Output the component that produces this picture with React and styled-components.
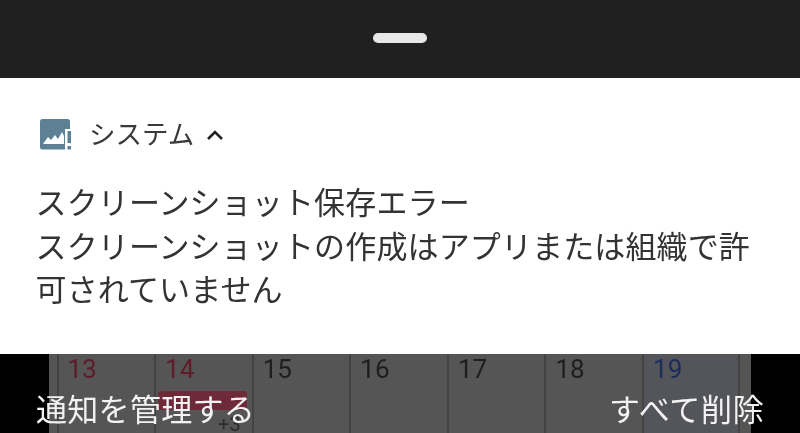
import React from "react";
import styled, { createGlobalStyle } from "styled-components";

const Global = createGlobalStyle`
  html, body { margin: 0; padding: 0; background: #000; }
  #root { width: 800px; height: 433px; overflow: hidden; }
`;
const FONT = `"Noto Sans CJK JP", "Noto Sans", Roboto, sans-serif`;

const Screen = styled.div`
  width: 800px; height: 433px; display: flex; flex-direction: column;
  background: #000; font-family: ${FONT}; filter: blur(0.35px);
`;
const HandleBar = styled.div`
  height: 78px; flex: none; background: #202020;
  display: flex; align-items: center; justify-content: center;
`;
const Handle = styled.div`
  width: 54px; height: 10px; border-radius: 5px; background: #e8e8e8; margin-bottom: 2px;
`;
const Card = styled.section`
  height: 276px; flex: none; background: #fff; box-sizing: border-box;
  padding: 38px 36px 0 36px; color: #333;
`;
const Header = styled.div`
  display: flex; align-items: center; height: 36px; padding-left: 4px;
`;
const AppName = styled.span`
  font-size: 26.5px; line-height: 36px; margin-left: 17px; margin-top: -2px; color: #3a3a3a;
`;
const Chevron = styled.svg`
  width: 18px; height: 12px; margin-left: 12px; margin-top: 1px;
`;
const Body = styled.div`
  margin-top: 27px; font-size: 31px; line-height: 43.5px; color: #333; letter-spacing: 0.13px; margin-left: -0.5px;
`;
const Line = styled.div` white-space: nowrap; `;
const Footer = styled.div`
  position: relative; flex: 1; display: flex; justify-content: center; overflow: hidden;
`;
const Calendar = styled.div`
  width: 702px; height: 100%; background: #555; box-sizing: border-box; padding-left: 7.5px;
  display: grid; grid-template-columns: repeat(7, 97.6px);
`;
const Day = styled.div`
  position: relative; border-left: 2px solid #434343; box-sizing: border-box; height: 100%;
  padding: 0 0 0 9px; font-family: Roboto, sans-serif; font-size: 26px; line-height: 31px;
  color: ${p => p.$color}; background: ${p => p.$bg || "transparent"};
  &:last-child { border-right: 2px solid #434343; }
`;
const EventChip = styled.div`
  position: absolute; left: 1.5px; top: 37px; width: 89px; height: 19px;
  border-radius: 3px; background: #6f2a3a;
`;
const More = styled.span`
  position: absolute; left: 62px; top: 59px; font-size: 20px; line-height: 22px; color: #2b2b2b;
`;
const Action = styled.span`
  position: absolute; top: 32px; font-size: 31px; line-height: 44px; color: #f2f2f2;
  letter-spacing: ${p => p.$track}px; white-space: nowrap; left: ${p => p.$left}px;
`;

const days = [
  { n: 13, c: "#5e1c28" }, { n: 14, c: "#5e1c28", ev: true }, { n: 15, c: "#1e1e1e" },
  { n: 16, c: "#1e1e1e" }, { n: 17, c: "#1e1e1e" }, { n: 18, c: "#1e1e1e" },
  { n: 19, c: "#1b2b5c", bg: "#54555a" },
];

export default function App() {
  return (
    <Screen>
      <Global />
      <HandleBar><Handle /></HandleBar>
      <Card>
        <Header>
          <svg width="32" height="31" viewBox="0 0 32 31">
            <path fill="#5d8094" d="M2.5 0h25a2.5 2.5 0 0 1 2.5 2.5V10h-5v20.5H2.500a2.500 2.500 0 0 1-2.500-2.500V2.500A2.500 2.500 0 0 1 2.500 0z" />
            <path fill="#fff" d="M3 25l5-7 3 3 4-5 3 4 4-7 2 4v8H3z" />
            <rect x="27.5" y="12" width="3.500" height="12" fill="#5d8094" />
            <rect x="27.5" y="27" width="3.500" height="3.500" fill="#5d8094" />
          </svg>
          <AppName>システム</AppName>
          <Chevron viewBox="0 0 18 12">
            <path d="M2 10l7-7 7 7" fill="none" stroke="#222" strokeWidth="2.6" />
          </Chevron>
        </Header>
        <Body>
          <Line>スクリーンショット保存エラー</Line>
          <Line>スクリーンショットの作成はアプリまたは組織で許</Line>
          <Line>可されていません</Line>
        </Body>
      </Card>
      <Footer>
        <Calendar>
          {days.map(d => (
            <Day key={d.n} $color={d.c} $bg={d.bg}>
              {d.n}
              {d.ev && <EventChip />}
              {d.ev && <More>+3</More>}
            </Day>
          ))}
        </Calendar>
        <Action $left={36} $track={0.3}>通知を管理する</Action>
        <Action $left={609} $track={0.8}>すべて削除</Action>
      </Footer>
    </Screen>
  );
}
